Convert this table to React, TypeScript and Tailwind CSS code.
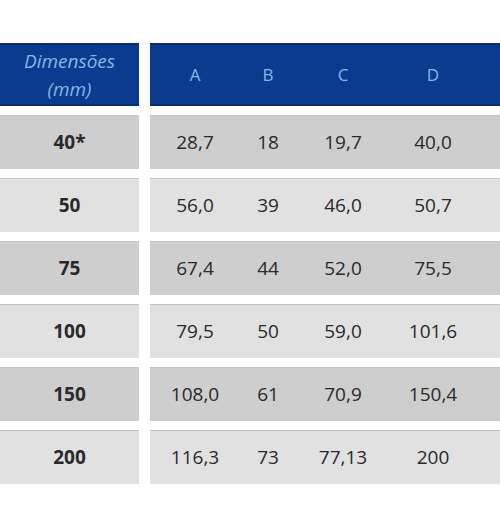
const rows = [
  { size: "40*", a: "28,7", b: "18", c: "19,7", d: "40,0" },
  { size: "50", a: "56,0", b: "39", c: "46,0", d: "50,7" },
  { size: "75", a: "67,4", b: "44", c: "52,0", d: "75,5" },
  { size: "100", a: "79,5", b: "50", c: "59,0", d: "101,6" },
  { size: "150", a: "108,0", b: "61", c: "70,9", d: "150,4" },
  { size: "200", a: "116,3", b: "73", c: "77,13", d: "200" },
];

const cols = "grid grid-cols-[90px_56px_94px_86px_1fr] items-center text-center";

export default function App() {
  return (
    <div className="h-[519px] w-[500px] overflow-hidden bg-white pt-[43px] font-['Open_Sans',sans-serif]">
      <div className="flex flex-col gap-[9px]">
        <div className="flex h-[63px] gap-[11px]">
          <div className="flex w-[139px] flex-col items-center justify-center border-y-2 border-[#08306f] bg-[#0a3b8f] text-[19px] italic leading-[28px] text-[#86b6e6]">
            <span>Dimensões</span>
            <span>(mm)</span>
          </div>
          <div className={`${cols} flex-1 border-y-2 border-[#08306f] bg-[#0a3b8f] text-[17px] text-[#86b6e6]`}>
            <span>A</span>
            <span>B</span>
            <span>C</span>
            <span>D</span>
            <span />
          </div>
        </div>

        {rows.map((row, i) => {
          const bg = i % 2 === 0 ? "bg-[#cecece]" : "bg-[#e1e1e1]";
          return (
            <div key={row.size} className="flex h-[54px] gap-[11px] text-[19px] text-[#2a2a2a]">
              <div className={`flex w-[139px] items-center justify-center border-t border-[#c4c4c4] font-bold ${bg}`}>
                {row.size}
              </div>
              <div className={`${cols} flex-1 border-t border-[#c4c4c4] ${bg}`}>
                <span>{row.a}</span>
                <span>{row.b}</span>
                <span>{row.c}</span>
                <span>{row.d}</span>
                <span />
              </div>
            </div>
          );
        })}
      </div>
    </div>
  );
}
